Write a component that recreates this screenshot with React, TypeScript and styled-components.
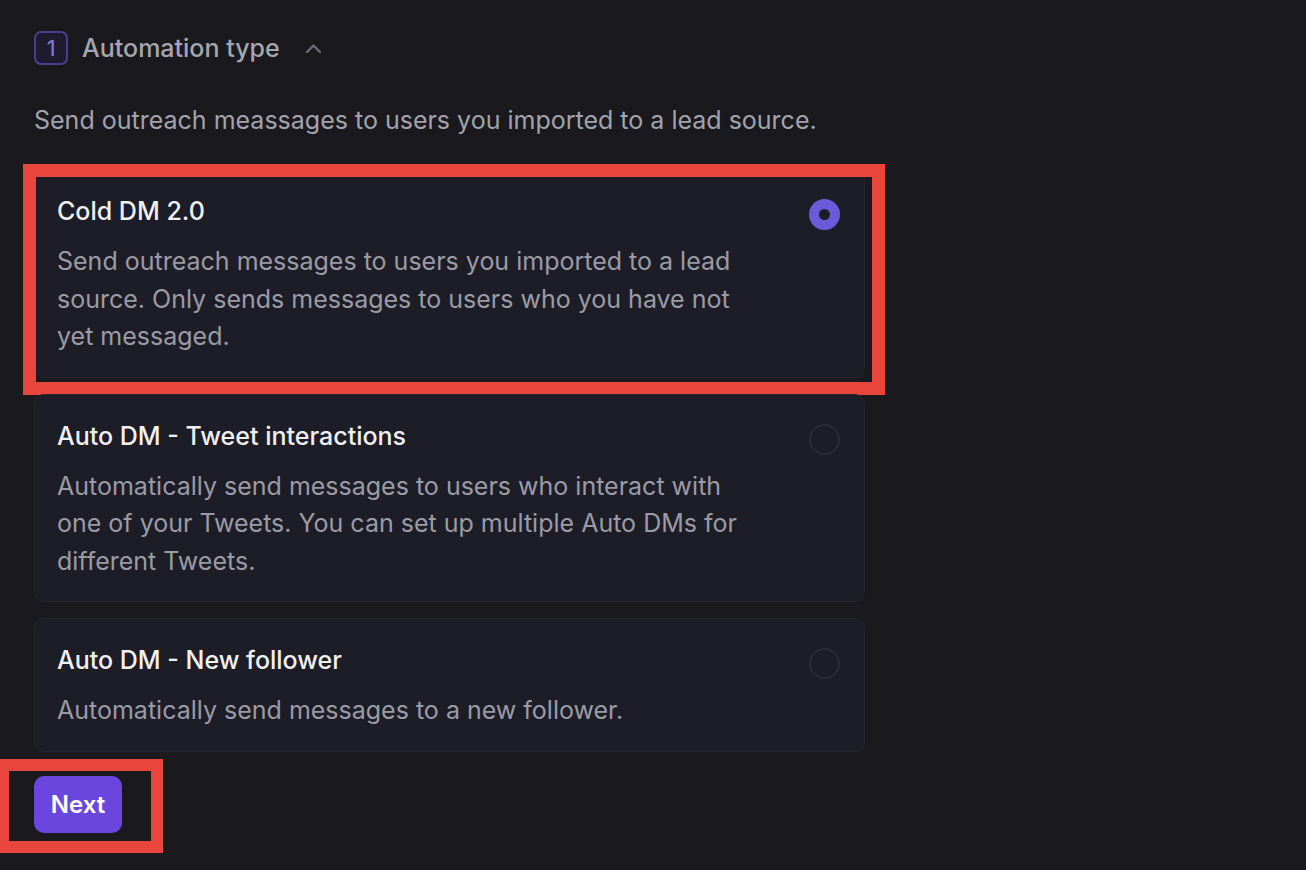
import * as React from 'react';
import styled, { createGlobalStyle } from 'styled-components';

const GlobalStyle = createGlobalStyle`
    html, body {
        margin: 0;
        padding: 0;
        background-color: #19191e;
    }
    body {
        font-family: Inter, "Noto Sans", "Liberation Sans", sans-serif;
        -webkit-font-smoothing: antialiased;
    }
`;

const Page = styled.main`
    min-height: 870px;
    padding: 31px 0 0 34px;
    box-sizing: border-box;
    overflow: hidden;
`;

const Header = styled.div`
    display: flex;
    flex-direction: row;
    align-items: center;
    height: 34px;
`;

const StepBadge = styled.span`
    width: 34px;
    height: 34px;
    box-sizing: border-box;
    border: 2px solid #4b3e8f;
    border-radius: 7px;
    background-color: #1e1b2e;
    color: #8072d4;
    font-size: 21px;
    font-weight: 500;
    display: flex;
    align-items: center;
    justify-content: center;
`;

const HeaderTitle = styled.span`
    margin-left: 14px;
    font-size: 25px;
    font-weight: 500;
    color: #a6a6b0;
`;

const Chevron = styled.svg`
    margin-left: 25px;
    width: 17px;
    height: 11px;
`;

const Intro = styled.p`
    margin: 40px 0 0 0;
    font-size: 25px;
    line-height: 30px;
    color: #a3a3ad;
`;

const CardList = styled.div`
    margin-top: 34px;
    width: 831px;
    display: flex;
    flex-direction: column;
    gap: 16px;
`;

const Spot = styled.div`
    position: relative;
`;

const Highlight = styled.div<{ $top: number; $left: number; $right: number; $bottom: number; $w: number }>`
    position: absolute;
    top: ${p => p.$top}px;
    left: ${p => p.$left}px;
    right: ${p => p.$right}px;
    bottom: ${p => p.$bottom}px;
    border: ${p => p.$w}px solid #e8453c;
    pointer-events: none;
`;

const Card = styled.div`
    display: flex;
    flex-direction: row;
    justify-content: space-between;
    padding: 23px 24px 21px 22px;
    background-color: #1d1d27;
    border: 1px solid #24252f;
    border-radius: 10px;
    box-sizing: border-box;
    cursor: pointer;
`;

const CardBody = styled.div`
    display: flex;
    flex-direction: column;
`;

const CardTitle = styled.span`
    font-size: 25px;
    line-height: 36px;
    font-weight: 500;
    color: #f0f0f2;
`;

const CardText = styled.p`
    margin: 14px 0 0 0;
    max-width: 700px;
    font-size: 25px;
    line-height: 37.5px;
    color: #9b9ba6;
`;

const Radio = styled.span<{ $checked: boolean }>`
    flex: none;
    width: 31px;
    height: 31px;
    margin-top: 6px;
    box-sizing: border-box;
    border-radius: 50%;
    border: ${p => (p.$checked ? '10px solid #6b5bd8' : '2px solid #2a2b36')};
    background-color: #1d1d27;
`;

const NextSpot = styled(Spot)`
    margin-top: 24px;
    align-self: flex-start;
    width: 88px;
`;

const NextButton = styled.button`
    width: 88px;
    height: 57px;
    border: none;
    border-radius: 10px;
    background-color: #6b46de;
    color: #ffffff;
    font-family: Inter, "Noto Sans", "Liberation Sans", sans-serif;
    font-size: 24px;
    font-weight: 600;
    cursor: pointer;
`;

const options = [
    {
        title: 'Cold DM 2.0',
        text: 'Send outreach messages to users you imported to a lead source. Only sends messages to users who you have not yet messaged.',
    },
    {
        title: 'Auto DM - Tweet interactions',
        text: 'Automatically send messages to users who interact with one of your Tweets. You can set up multiple Auto DMs for different Tweets.',
    },
    {
        title: 'Auto DM - New follower',
        text: 'Automatically send messages to a new follower.',
    },
];

function App() {
    const [selected, setSelected] = React.useState(0);

    return (
        <Page>
            <GlobalStyle />
            <Header>
                <StepBadge>1</StepBadge>
                <HeaderTitle>Automation type</HeaderTitle>
                <Chevron viewBox="0 0 17 11" fill="none">
                    <path d="M2 9 L8.5 2.5 L15 9" stroke="#6c6c78" strokeWidth="2.4" strokeLinecap="round" strokeLinejoin="round" />
                </Chevron>
            </Header>
            <Intro>Send outreach meassages to users you imported to a lead source.</Intro>
            <CardList>
                {options.map((o, i) => (
                    <Spot key={o.title}>
                        <Card onClick={() => setSelected(i)}>
                            <CardBody>
                                <CardTitle>{o.title}</CardTitle>
                                <CardText>{o.text}</CardText>
                            </CardBody>
                            <Radio $checked={selected === i} />
                        </Card>
                        {i === 0 && <Highlight $top={-5} $left={-11} $right={-20} $bottom={-17} $w={13} />}
                    </Spot>
                ))}
            </CardList>
            <NextSpot>
                <NextButton>Next</NextButton>
                <Highlight $top={-17} $left={-37} $right={-41} $bottom={-20} $w={12} />
            </NextSpot>
        </Page>
    );
}

export default App;
